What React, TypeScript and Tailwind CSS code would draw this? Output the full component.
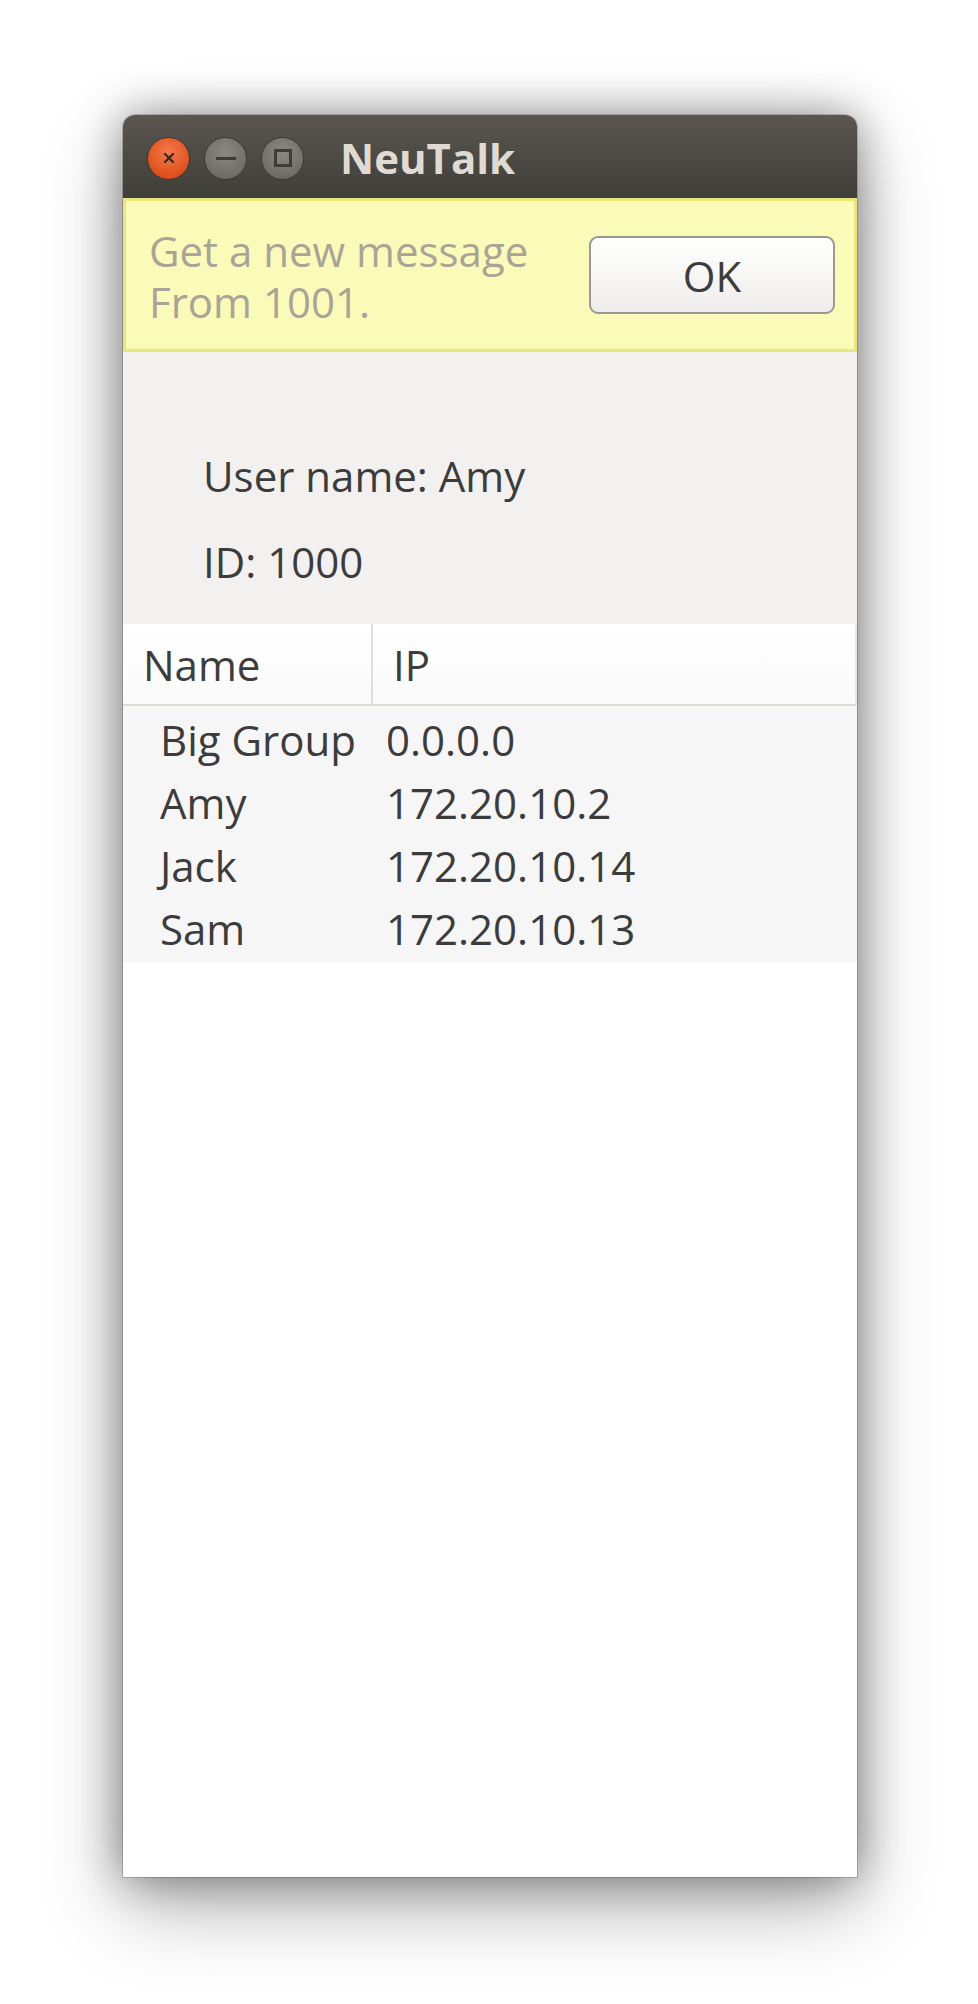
import React from "react";

const font = { fontFamily: '"Open Sans", "Noto Sans", "DejaVu Sans", sans-serif' };

function TitleButton({ kind }: { kind: "close" | "min" | "max" }) {
  if (kind === "close") {
    return (
      <div className="w-[43px] h-[43px] rounded-full bg-[radial-gradient(circle_at_50%_35%,#f47a4a,#e0501c_70%,#c8431a)] border border-[#3a3935] flex items-center justify-center">
        <svg width="16" height="16" viewBox="0 0 16 16">
          <path d="M4 4 L12 12 M12 4 L4 12" stroke="#3b2a22" strokeWidth="2.4" strokeLinecap="round" />
        </svg>
      </div>
    );
  }
  return (
    <div className="w-[43px] h-[43px] rounded-full bg-[radial-gradient(circle_at_50%_35%,#8a8984,#6f6e69_70%,#615f5a)] border border-[#3a3935] flex items-center justify-center">
      {kind === "min" ? (
        <div className="w-[20px] h-[3px] bg-[#3d3c38]" />
      ) : (
        <div className="w-[18px] h-[18px] border-[3px] border-[#3d3c38]" />
      )}
    </div>
  );
}

export default function App() {
  const rows = [
    ["Big Group", "0.0.0.0"],
    ["Amy", "172.20.10.2"],
    ["Jack", "172.20.10.14"],
    ["Sam", "172.20.10.13"],
  ];
  return (
    <div className="w-[978px] h-[2004px] bg-white overflow-hidden pt-[115px] pl-[123px]" style={font}>
      <div className="w-[734px] h-[1762px] flex flex-col rounded-t-[12px] overflow-hidden bg-white shadow-[0_0_45px_rgba(0,0,0,0.4),0_30px_80px_rgba(0,0,0,0.3),0_0_0_1px_rgba(0,0,0,0.18)]">
        {/* title bar */}
        <div className="h-[83px] shrink-0 flex items-center bg-[linear-gradient(#5a5750,#3f3e39)] pl-[24px] pt-[3px]">
          <div className="flex items-center gap-[14px]">
            <TitleButton kind="close" />
            <TitleButton kind="min" />
            <TitleButton kind="max" />
          </div>
          <div className="ml-[36px] text-[42px] font-bold text-[#dfdbd2] leading-none">NeuTalk</div>
        </div>
        {/* banner */}
        <div className="h-[154px] shrink-0 bg-[#fbfbb9] border-[3px] border-[#e8e67c] flex items-center justify-between pl-[23px] pr-[19px]">
          <div className="text-[42px] leading-[51px] text-[#aaa397] mt-[1px] whitespace-nowrap">
            <div>Get a new message</div>
            <div>From 1001.</div>
          </div>
          <button className="w-[246px] h-[78px] shrink-0 rounded-[9px] border-2 border-[#9a9893] bg-[linear-gradient(#ffffff,#eeedeb)] text-[42px] text-[#3c3c3c] flex items-center justify-center">
            OK
          </button>
        </div>
        {/* user info */}
        <div className="h-[272px] shrink-0 bg-[#f2f1f0] pl-[80px] pt-[98px] text-[42px] text-[#3c3c3c] leading-[52px]">
          <div>User name: Amy</div>
          <div className="mt-[34px]">ID: 1000</div>
        </div>
        {/* table header */}
        <div className="h-[82px] shrink-0 flex bg-[linear-gradient(#ffffff,#fafafa)] border-b-2 border-[#dedbd6] border-r-2 border-r-[#ebe9e6] text-[42px] text-[#3c3c3c]">
          <div className="w-[250px] border-r-2 border-[#e0ded9] pl-[20px] flex items-center">Name</div>
          <div className="flex-1 pl-[20px] flex items-center">IP</div>
        </div>
        {/* rows */}
        <div className="bg-[#f6f6f6] pt-[2px] pb-[2px] text-[42px] text-[#3c3c3c]">
          {rows.map(([n, ip]) => (
            <div key={n} className="h-[63px] flex items-center">
              <div className="w-[263px] pl-[37px] whitespace-nowrap">{n}</div>
              <div>{ip}</div>
            </div>
          ))}
        </div>
        <div className="flex-1 bg-white" />
      </div>
    </div>
  );
}
